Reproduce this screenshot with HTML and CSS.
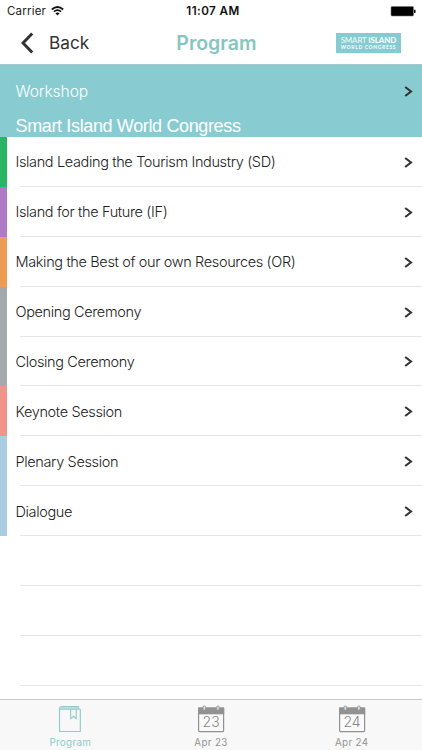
FILE: index.html
```html
<!DOCTYPE html>
<html lang="en">
<head>
<meta charset="utf-8">
<title>Program</title>
<link rel="stylesheet" href="styles.css">
</head>
<body>
<div class="screen">
  <div class="status">
    <div class="carrier"><span>Carrier</span>
      <svg class="wifi" width="13" height="10" viewBox="0 0 13 10" fill="none" stroke="#111" stroke-width="1.7"><path d="M.8 3.5Q6.5-1.5 12.2 3.5M2.9 5.7Q6.5 2.5 10.1 5.7"/><path d="M4.4 7.2Q6.5 5.6 8.6 7.2L6.5 9.4Z" fill="#111" stroke="none"/></svg>
    </div>
    <time class="clock">11:07 AM</time>
    <svg class="battery" width="26" height="11" viewBox="0 0 26 11"><rect x="1" y=".5" width="22.5" height="9.5" rx="1" fill="#000" stroke="#777" stroke-width=".6"/><path d="M24 3.7h.9q.7 0 .7 1v1.3q0 1-.7 1h-.9z" fill="#111"/></svg>
  </div>
  <header class="nav">
    <div class="back"><svg width="14" height="22" viewBox="0 0 14 22" fill="none" stroke="#333" stroke-width="3"><path d="M11.2 1.5 2 11 11.2 20.5"/></svg><span>Back</span></div>
    <h1>Program</h1>
    <div class="logo"><div class="logo-top">SMART <b>ISLAND</b></div><div class="logo-bottom">WORLD CONGRESS</div></div>
  </header>
  <main>
    <section class="banner">
      <div class="workshop"><span>Workshop</span><svg class="chev" width="9" height="11" viewBox="0 0 9 11"><path d="M1.2 1 7 5.5 1.2 10"/></svg></div>
      <h2>Smart Island World Congress</h2>
    </section>
    <ul class="list">
      <li class="green"><div class="cell"><span>Island Leading the Tourism Industry (SD)</span><svg class="chev" width="9" height="11" viewBox="0 0 9 11"><path d="M1.2 1 7 5.5 1.2 10"/></svg></div></li>
      <li class="purple"><div class="cell"><span>Island for the Future (IF)</span><svg class="chev" width="9" height="11" viewBox="0 0 9 11"><path d="M1.2 1 7 5.5 1.2 10"/></svg></div></li>
      <li class="orange"><div class="cell"><span>Making the Best of our own Resources (OR)</span><svg class="chev" width="9" height="11" viewBox="0 0 9 11"><path d="M1.2 1 7 5.5 1.2 10"/></svg></div></li>
      <li class="gray"><div class="cell"><span>Opening Ceremony</span><svg class="chev" width="9" height="11" viewBox="0 0 9 11"><path d="M1.2 1 7 5.5 1.2 10"/></svg></div></li>
      <li class="gray"><div class="cell"><span>Closing Ceremony</span><svg class="chev" width="9" height="11" viewBox="0 0 9 11"><path d="M1.2 1 7 5.5 1.2 10"/></svg></div></li>
      <li class="coral"><div class="cell"><span>Keynote Session</span><svg class="chev" width="9" height="11" viewBox="0 0 9 11"><path d="M1.2 1 7 5.5 1.2 10"/></svg></div></li>
      <li class="blue"><div class="cell"><span>Plenary Session</span><svg class="chev" width="9" height="11" viewBox="0 0 9 11"><path d="M1.2 1 7 5.5 1.2 10"/></svg></div></li>
      <li class="blue"><div class="cell"><span>Dialogue</span><svg class="chev" width="9" height="11" viewBox="0 0 9 11"><path d="M1.2 1 7 5.5 1.2 10"/></svg></div></li>
      <li><div class="cell"></div></li>
      <li><div class="cell"></div></li>
      <li><div class="cell"></div></li>
    </ul>
  </main>
  <footer class="tabs">
    <div class="tab active">
      <svg width="28" height="28" viewBox="0 0 28 28" fill="none" stroke="#8dcbc8" stroke-width="1.1"><path d="M3.5 3.6V26.5H24.3V4.2M3.5 3.6Q3.5 1.5 5.5 1.5H22.3V4.2"/><path d="M3.7 2H22v2.2H3.7z" fill="#b9e2df" stroke="none"/><path d="M3.5 4.3H24.3M14.7 4.3V13.6L17.5 11.3 20.2 13.6V4.3"/></svg>
      <span>Program</span>
    </div>
    <div class="tab">
      <svg width="28" height="28" viewBox="0 0 28 28"><rect x="1.6" y="3" width="25" height="23.6" rx=".8" fill="#fafafa" stroke="#929292" stroke-width="1.2"/><path d="M1 2.5H27.2V9.3H1z" fill="#929292"/><path d="M6 1.6Q7.3 0 8.6 1.6V4.5Q7.3 6 6 4.5zM19.6 1.6Q20.9 0 22.2 1.6V4.5Q20.9 6 19.6 4.5z" fill="#ddd" stroke="#929292" stroke-width=".8"/><text class="day" x="14.1" y="22.3" text-anchor="middle">23</text></svg>
      <span>Apr 23</span>
    </div>
    <div class="tab">
      <svg width="28" height="28" viewBox="0 0 28 28"><rect x="1.6" y="3" width="25" height="23.6" rx=".8" fill="#fafafa" stroke="#929292" stroke-width="1.2"/><path d="M1 2.5H27.2V9.3H1z" fill="#929292"/><path d="M6 1.6Q7.3 0 8.6 1.6V4.5Q7.3 6 6 4.5zM19.6 1.6Q20.9 0 22.2 1.6V4.5Q20.9 6 19.6 4.5z" fill="#ddd" stroke="#929292" stroke-width=".8"/><text class="day" x="14.1" y="22.3" text-anchor="middle">24</text></svg>
      <span>Apr 24</span>
    </div>
  </footer>
</div>
</body>
</html>
```
FILE: styles.css
```css
* { box-sizing: border-box; }
body { margin: 0; background: #fff; font-family: Inter, "Liberation Sans", sans-serif; color: #222; }
h1, h2, ul { margin: 0; padding: 0; }
.screen { width: 422px; height: 750px; overflow: hidden; display: flex; flex-direction: column; }
.status { height: 22px; flex: none; display: grid; grid-template-columns: 1fr 1fr 1fr; align-items: center; padding: 0 6px 0 7px; font-size: 11.5px; line-height: 22px; }
.carrier { display: flex; align-items: center; gap: 5px; letter-spacing: .2px; }
.wifi { margin-top: -1px; }
.clock { text-align: center; font-weight: 600; font-size: 11.7px; color: #111; letter-spacing: .4px; margin-left: 3px; }
.battery { justify-self: end; }
.nav { height: 43px; flex: none; display: grid; grid-template-columns: 1fr 1fr 1fr; align-items: center; border-bottom: 1px solid #a6c9ca; padding: 0 21px; }
.back { display: flex; align-items: center; gap: 14px; font-size: 17.2px; color: #333; }
.back span { margin-top: -1px; }
.nav h1 { text-align: center; white-space: nowrap; font-size: 19.5px; font-weight: 600; color: #88c5c0; line-height: 42px; margin-left: 11px; }
.logo { justify-self: end; width: 65px; height: 20px; background: #87cbd2; color: #f0fafa; font-family: Lato, sans-serif; text-align: center; padding-top: 3px; white-space: nowrap; }
.logo-top { font-size: 8px; line-height: 8px; letter-spacing: -.15px; }
.logo b { font-weight: 900; }
.logo-bottom { font-size: 5px; line-height: 5px; font-weight: 900; letter-spacing: .65px; margin-top: 1px; }
main { height: 634px; flex: none; }
.banner { height: 72px; background: #88ccd2; color: #fff; padding: 0 9px 0 15px; overflow: hidden; }
.workshop { height: 52px; display: flex; align-items: center; justify-content: space-between; font-size: 15.6px; font-weight: 300; letter-spacing: -.1px; }
.workshop span { padding-left: .5px; }
.banner h2 { font: 400 18px/22px "Liberation Sans", sans-serif; letter-spacing: -.36px; margin-top: -2px; padding-left: .5px; }
.chev { fill: none; stroke: #333; stroke-width: 2.1; flex: none; }
.list { list-style: none; }
.list li { height: 49.88px; border-left: 7px solid transparent; padding-left: 8px; }
.cell { height: 100%; display: flex; align-items: center; justify-content: space-between; padding: 1px 9px 0 0; font-size: 14.5px; font-weight: 300; letter-spacing: -.36px; background: linear-gradient(#e5e5e5, #e5e5e5) 5px 100% / 100% 1px no-repeat; }
.cell span { padding-left: .5px; margin-top: -1px; }
.list .green { border-color: #2ab564; }
.list .purple { border-color: #ae79c7; }
.list .orange { border-color: #ee9c53; }
.list .gray { border-color: #a4a9ad; }
.list .coral { border-color: #f2938b; }
.list .blue { border-color: #a9cce3; }
.tabs { height: 51px; flex: none; background: #f8f8f8; border-top: 1px solid #c8c8c8; display: grid; grid-template-columns: repeat(3, 1fr); }
.tab { display: flex; flex-direction: column; align-items: center; padding-top: 5px; color: #929292; font-size: 9.8px; line-height: 14px; letter-spacing: .35px; }
.tab span { margin-top: 3px; }
.active { color: #8dcbc8; }
.day { font: 300 14px Inter, sans-serif; letter-spacing: 0; fill: #888; }
```
